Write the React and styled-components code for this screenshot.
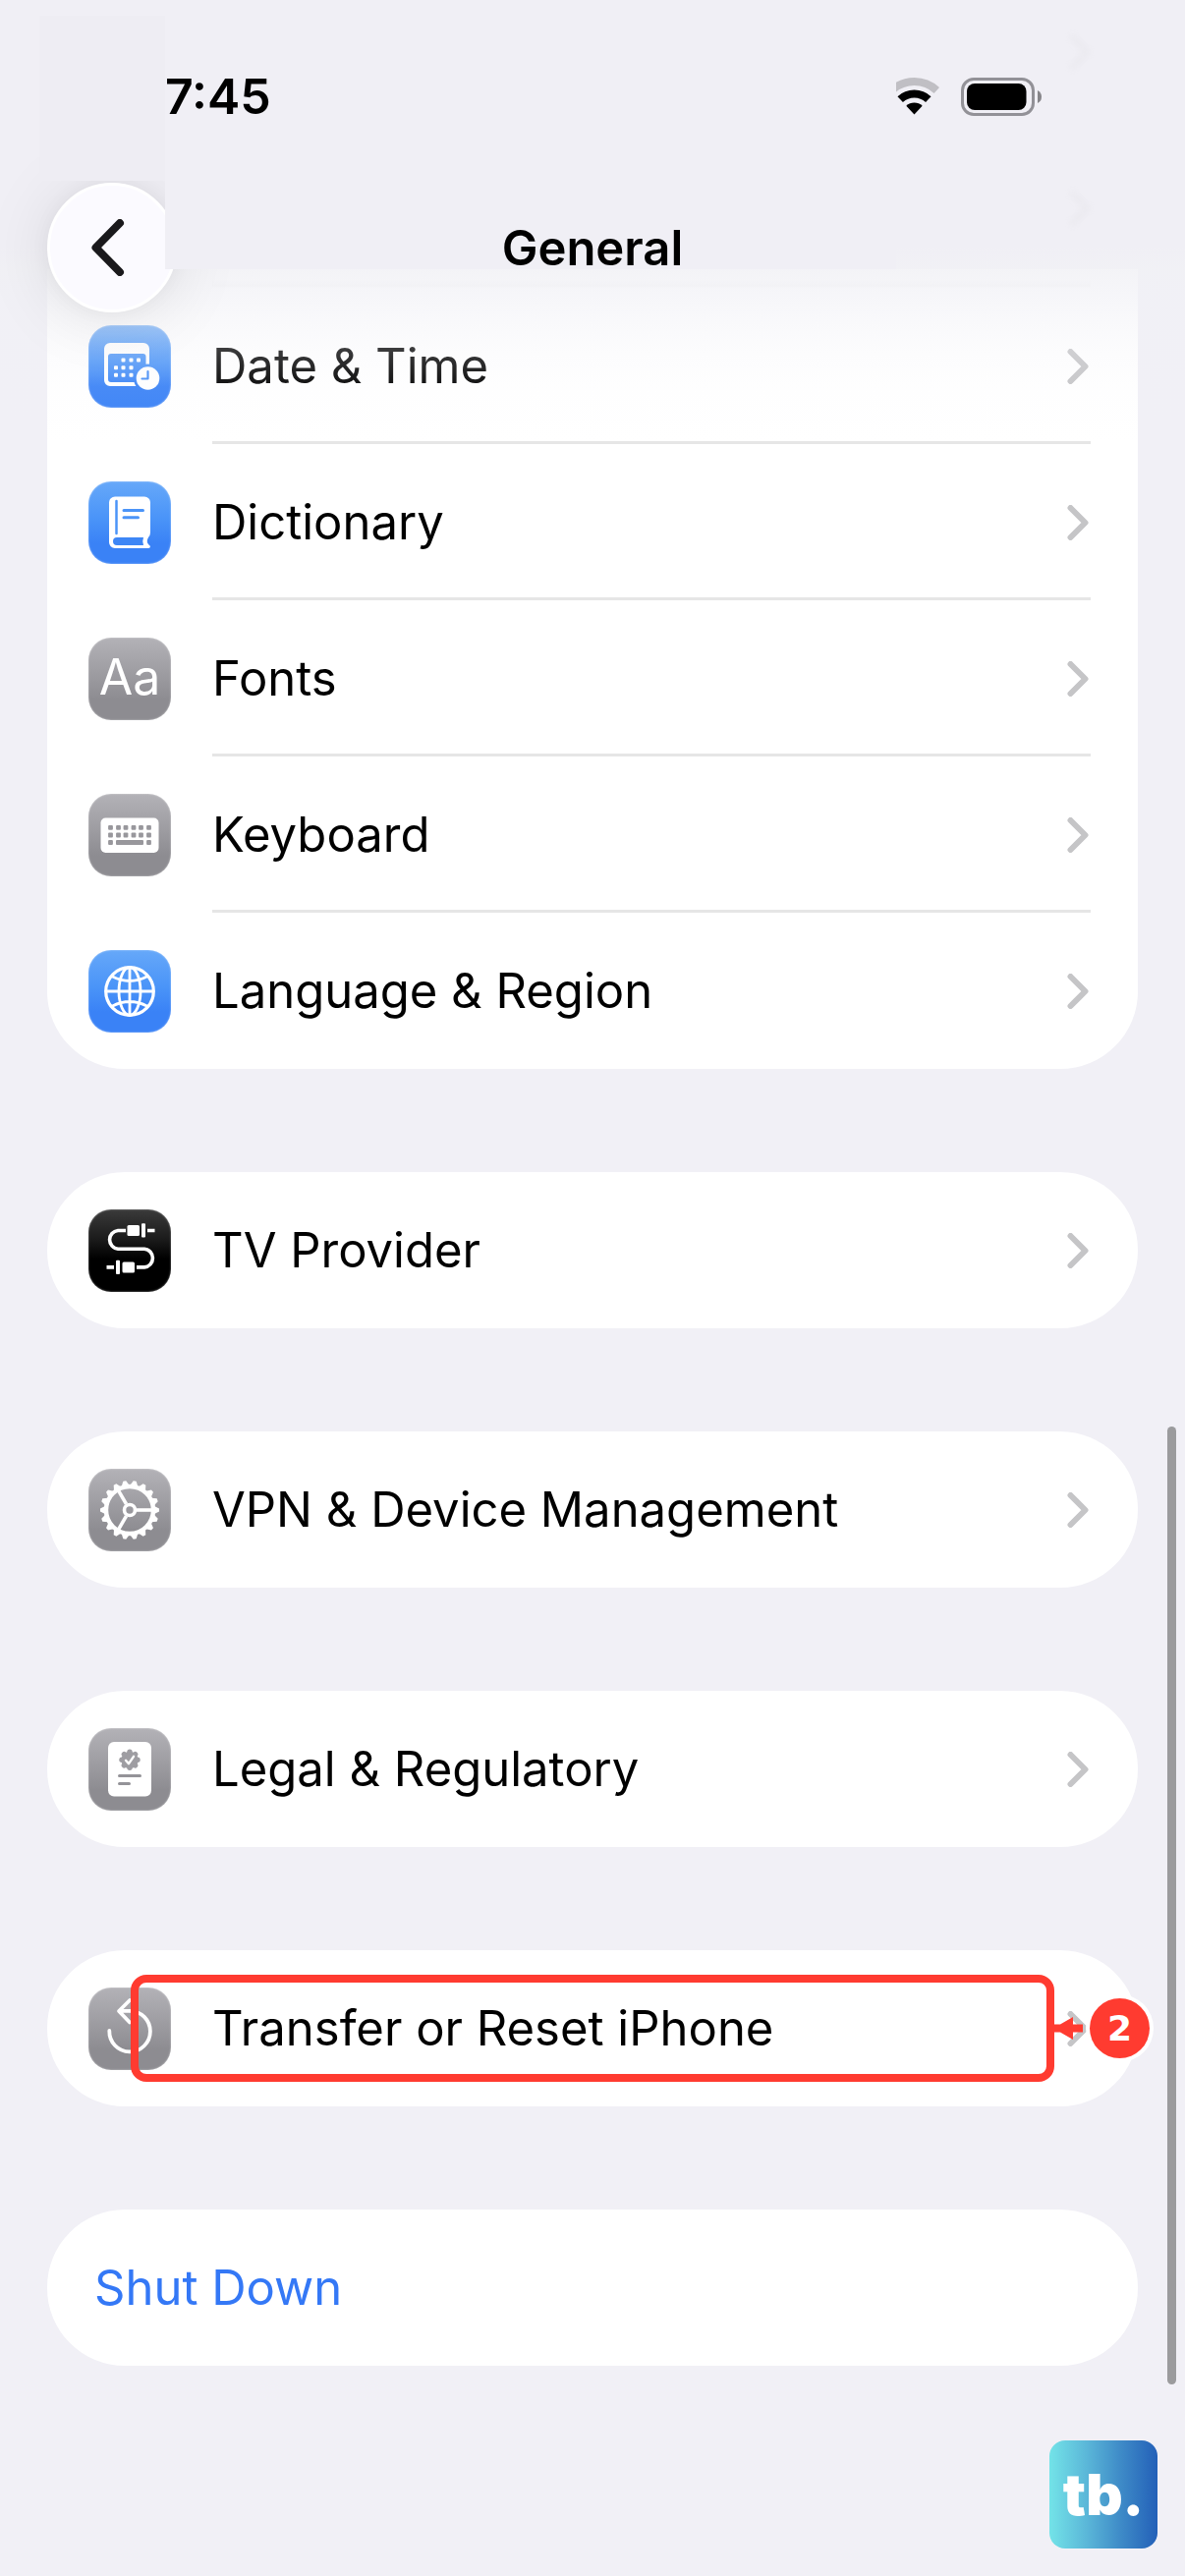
import React from 'react';
import styled, { createGlobalStyle, ThemeProvider } from 'styled-components';

const theme = {
  color: {
    page: '#f1f0f6',
    bar: '#f0eff5',
    card: '#ffffff',
    text: '#000000',
    link: '#3478f6',
    divider: '#e6e6e6',
    chevron: '#c5c5c7',
    scroll: '#9b9b9d',
    mark: '#ff3b30',
  },
  tile: {
    blue: 'linear-gradient(#66a8f9, #4a94f8 45%, #3a82f6 75%)',
    grey: 'linear-gradient(#b3b2b7, #9a999e 50%, #8d8c91 75%)',
    black: 'linear-gradient(#3a3a3a, #1c1c1c 35%, #000000 60%)',
  },
};

const GlobalStyle = createGlobalStyle`
  body {
    margin: 0;
    background: ${theme.color.page};
    font-family: Inter, "Liberation Sans", sans-serif;
  }
`;

const Screen = styled.div`
  position: relative;
  min-height: 100vh;
  box-sizing: border-box;
  background: ${(props) => props.theme.color.page};
  color: ${(props) => props.theme.color.text};
`;

const Header = styled.header`
  position: sticky;
  top: 0;
  z-index: 2;
`;

const Wash = styled.div`
  position: absolute;
  top: 0;
  left: 0;
  right: 0;
  height: 450px;
  pointer-events: none;
  background: linear-gradient(
    rgba(240, 239, 245, 1) 250px,
    rgba(241, 241, 245, 0.84) 274px,
    rgba(241, 241, 246, 0.65) 300px,
    rgba(241, 241, 246, 0.4) 331px,
    rgba(241, 241, 246, 0.24) 356px,
    rgba(241, 241, 246, 0.08) 392px,
    rgba(241, 241, 246, 0) 450px
  );

  svg {
    position: absolute;
    right: 96px;
    opacity: 0.12;
    filter: blur(3px);
  }

  svg:first-child {
    top: 35px;
  }

  svg:last-child {
    top: 194px;
  }
`;

const Cover = styled.div`
  position: absolute;
  z-index: 1;
  top: 0;
  left: 168px;
  right: 294px;
  height: 274px;
  background: ${(props) => props.theme.color.bar};

  &:before {
    content: "";
    position: absolute;
    top: 16px;
    right: 100%;
    width: 128px;
    height: 168px;
    background: #eeedf3;
  }
`;

const StatusBar = styled.div`
  position: relative;
  z-index: 2;
  display: flex;
  align-items: center;
  justify-content: space-between;
  height: 186px;
  padding: 10px 146px 0 168px;
  box-sizing: border-box;
`;

const Clock = styled.time`
  font-size: 50px;
  font-weight: 600;
`;

const StatusIcons = styled.div`
  display: flex;
  align-items: center;
  gap: 22px;
`;

const NavBar = styled.nav`
  display: grid;
  grid-template-columns: 132px 1fr 132px;
  align-items: center;
  padding: 0 48px;
`;

const BackButton = styled.button`
  position: relative;
  z-index: 1;
  display: flex;
  align-items: center;
  justify-content: center;
  width: 132px;
  height: 132px;
  padding: 0 8px 0 0;
  border: 3px solid #ffffff;
  border-radius: 50%;
  background: #fbfaff;
  color: #1a191c;
  box-shadow: 0 4px 70px rgba(0, 0, 0, 0.1), 0 0 20px rgba(0, 0, 0, 0.04);
`;

const Title = styled.h1`
  position: relative;
  z-index: 2;
  margin: 0;
  text-align: center;
  font-size: 49px;
  font-weight: 600;
`;

const Groups = styled.main`
  display: flex;
  flex-direction: column;
  gap: 105px;
  margin-top: -44px;
  padding: 0 48px 214px;
`;

const Card = styled.ul`
  margin: 0;
  padding: 0;
  list-style: none;
  border-radius: ${(props) => (props.$cut ? '0 0 79px 79px' : '79px')};
  background: ${(props) => props.theme.color.card};
`;

const CutRow = styled.li`
  height: 19px;
  margin: 0 48px 0 168px;
  background: linear-gradient(rgba(0, 0, 0, 0) 10px, rgba(0, 0, 0, 0.04) 17px, rgba(0, 0, 0, 0));
`;

const Item = styled.li`
  position: relative;
`;

const Row = styled.button`
  display: flex;
  align-items: center;
  gap: 42px;
  width: 100%;
  height: 159px;
  padding: 0 48px 0 42px;
  border: 0;
  background: none;
  color: inherit;
  font: inherit;
  text-align: left;
`;

const ActionRow = styled(Row)`
  padding: 0 48px;
  color: ${(props) => props.theme.color.link};
  font-size: 49px;
`;

const Tile = styled.span`
  flex: none;
  width: 84px;
  height: 84px;
  border-radius: 23px;
  background: ${(props) => props.theme.tile[props.$tone]};
  box-shadow: inset 0 0 2px rgba(255, 255, 255, 0.6);

  svg {
    display: block;
  }
`;

const RowBody = styled.span`
  display: flex;
  flex: 1;
  align-items: center;
  justify-content: space-between;
  height: 100%;
  padding-right: 2px;
  font-size: 49px;
  box-shadow: ${(props) => (props.$divided ? `inset 0 -3px ${props.theme.color.divider}` : 'none')};
`;

const Highlight = styled.div`
  position: absolute;
  inset: 25px 85px;
  border: 8px solid ${(props) => props.theme.color.mark};
  border-radius: 16px;
  pointer-events: none;
`;

const Arrow = styled.svg`
  position: absolute;
  top: 67px;
  right: 56px;
`;

const Step = styled.span`
  position: absolute;
  top: 49px;
  right: -12px;
  display: flex;
  align-items: center;
  justify-content: center;
  width: 61px;
  height: 61px;
  border-radius: 50%;
  background: ${(props) => props.theme.color.mark};
  box-shadow: 0 0 0 4px #ffffff;
  color: #ffffff;
  font: bold 36px "DejaVu Sans", sans-serif;
`;

const ScrollThumb = styled.div`
  position: absolute;
  top: 1452px;
  right: 9px;
  width: 9px;
  height: 975px;
  border-radius: 5px;
  background: ${(props) => props.theme.color.scroll};
`;

const Watermark = styled.div`
  position: absolute;
  right: 28px;
  bottom: 28px;
  display: flex;
  align-items: center;
  justify-content: center;
  width: 110px;
  height: 110px;
  border-radius: 16px;
  background: linear-gradient(90deg, #73e3e8, #5ab6d8 35%, #3f8cc8 65%, #2360b8);
  color: #ffffff;
  font: 900 58px Inter, sans-serif;
`;

const Chevron = () => (
  <svg width="22" height="36" viewBox="0 0 22 36" fill="none" stroke={theme.color.chevron} strokeWidth="6" strokeLinecap="round" strokeLinejoin="round">
    <path d="M3.5 3L18.5 18L3.5 33" />
  </svg>
);

const Glyph = ({ children, ...rest }) => (
  <svg width="84" height="84" viewBox="0 0 84 84" fill="none" strokeLinecap="round" strokeLinejoin="round" {...rest}>
    {children}
  </svg>
);

const dots = [[35.5, 35.5], [43.5, 35.5], [51, 35.5], [28, 43.2], [35.5, 43.2], [43.5, 43.2], [28, 50.7], [35.5, 50.7], [43.5, 50.7]];

const DateIcon = () => (
  <Glyph>
    <mask id="clock-gap">
      <rect width="84" height="84" fill="#fff" />
      <circle cx="60.5" cy="54" r="14.5" fill="#000" />
    </mask>
    <g mask="url(#clock-gap)" fill="#fff">
      <path fillRule="evenodd" d="M22 18H56a6 6 0 0 1 6 6V62H22a6 6 0 0 1-6-6V24a6 6 0 0 1 6-6ZM23 29a3 3 0 0 0-3 3V55a3 3 0 0 0 3 3H58.5V32a3 3 0 0 0-3-3Z" />
      {dots.map(([x, y]) => (
        <rect key={`${x}-${y}`} x={x - 2} y={y - 2} width="4" height="4" rx="1" />
      ))}
    </g>
    <circle cx="60.5" cy="54" r="11.8" fill="#fff" />
    <path d="M60.5 47V54.5H54.5" stroke="#458df6" strokeWidth="2.2" />
  </Glyph>
);

const DictionaryIcon = () => (
  <Glyph>
    <path fill="#fff" d="M27 15.5H57a6 6 0 0 1 6 6V52q0 3-2 5q-2.5 4 0 7l2 2q0 2-2 2H27a6 6 0 0 1-6-6V21.5a6 6 0 0 1 6-6Z" />
    <path fill="#3d86f6" d="M29 57H56q-1.5 4 0 8H29a4 4 0 0 1 0-8Z" />
    <path stroke="#4b94f8" strokeWidth="2.5" d="M28.5 20V53" />
    <path stroke="#4b94f8" strokeWidth="3" d="M36 29.5H55.5M36 36.7H50.5" />
  </Glyph>
);

const FontsIcon = () => (
  <Glyph>
    <text x="42" y="58" fill="#fff" textAnchor="middle" fontFamily="Inter, sans-serif" fontSize="50">Aa</text>
  </Glyph>
);

const keyColumns = [22.5, 30.5, 38, 46, 53.5, 61.5];

const KeyboardIcon = () => (
  <Glyph>
    <rect x="12.5" y="24.5" width="59" height="35.5" rx="5" fill="#fff" />
    <g fill="#98979c">
      {keyColumns.map((x) => (
        <React.Fragment key={x}>
          <rect x={x - 2.4} y="32" width="4.8" height="4.8" rx="1" />
          <rect x={x - 2.4} y="39.6" width="4.8" height="4.8" rx="1" />
        </React.Fragment>
      ))}
      <rect x="20.1" y="47.1" width="4.8" height="4.8" rx="1" />
      <rect x="28" y="47.1" width="28" height="4.8" rx="1" />
      <rect x="59.1" y="47.1" width="4.8" height="4.8" rx="1" />
    </g>
  </Glyph>
);

const GlobeIcon = () => (
  <Glyph stroke="#fff" strokeWidth="2.8">
    <circle cx="42" cy="42" r="24.3" strokeWidth="3.2" />
    <ellipse cx="42" cy="42" rx="11" ry="24.3" />
    <path d="M42 18V66M18 42H66M24.5 27Q42 36 59.5 27M24.5 57Q42 48 59.5 57" />
  </Glyph>
);

const CableIcon = () => (
  <Glyph stroke="#fff" strokeWidth="3.6" strokeLinecap="butt">
    <path d="M38 21.5H30a9.4 9.4 0 0 0 0 18.7H57a9.4 9.4 0 0 1 0 18.7H49M60 21.5H67.5M18.5 58.9H26" />
    <g fill="#fff" stroke="none">
      <rect x="39.5" y="16" width="12.5" height="11" rx="1.5" />
      <rect x="54" y="14.3" width="4" height="14.3" rx="1" />
      <rect x="34.5" y="53.4" width="12.5" height="11" rx="1.5" />
      <rect x="28" y="51.7" width="4" height="14.3" rx="1" />
    </g>
  </Glyph>
);

const GearIcon = () => (
  <Glyph stroke="#fff" strokeWidth="3.6" strokeLinecap="butt">
    <circle cx="42" cy="42" r="24" strokeWidth="4.4" />
    <circle cx="42" cy="42" r="5.5" />
    {Array.from({ length: 18 }, (_, i) => (
      <path key={i} d="M67 38L72 40.5V43.5L67 46Z" fill="#fff" stroke="none" transform={`rotate(${i * 20} 42 42)`} />
    ))}
    {[0, 120, 240].map((angle) => (
      <path key={angle} d="M49 42H65" transform={`rotate(${angle} 42 42)`} />
    ))}
  </Glyph>
);

const LegalIcon = () => (
  <Glyph>
    <rect x="20" y="14" width="44" height="55.5" rx="6" fill="#fff" />
    <g fill="#9e9da2">
      <circle cx="42" cy="32.3" r="8.6" />
      {Array.from({ length: 8 }, (_, i) => (
        <circle key={i} cx="42" cy="24.3" r="2.7" transform={`rotate(${i * 45} 42 32.3)`} />
      ))}
    </g>
    <path d="M38 32.8L41 36.2L46 28.8" stroke="#fff" strokeWidth="2.4" />
    <path d="M31.5 48.5H52.5M31.5 56.5H41.5" stroke="#949398" strokeWidth="3" />
  </Glyph>
);

const ResetIcon = () => (
  <Glyph stroke="#fff" strokeWidth="3.8">
    <path d="M21.3 44A20.8 20.8 0 1 0 42 23.8H32M42 13L31 24L42 35.5" />
  </Glyph>
);

const WifiIcon = () => (
  <svg width="44" height="38" viewBox="0 0 44 38" fill="none" strokeWidth="8">
    <path stroke="#c0bfc4" d="M-4.3 13A33.5 33.5 0 0 1 41.3 13" />
    <path stroke="#000" d="M4.2 22.1A21 21 0 0 1 32.8 22.1" />
    <path fill="#000" d="M18.5 37.5L10.3 28.7A12 12 0 0 1 26.7 28.7Z" />
  </svg>
);

const BatteryIcon = () => (
  <svg width="82" height="39" viewBox="0 0 82 39">
    <rect x="1.5" y="1.5" width="72" height="36" rx="11.5" fill="none" stroke="#929197" strokeWidth="3" />
    <rect x="6" y="6" width="60.5" height="27" rx="8" />
    <path fill="#868589" d="M78 13Q82 15 82 19.5T78 26Z" />
  </svg>
);

const groups = [
  [
    { label: 'Date & Time', tone: 'blue', icon: DateIcon },
    { label: 'Dictionary', tone: 'blue', icon: DictionaryIcon },
    { label: 'Fonts', tone: 'grey', icon: FontsIcon },
    { label: 'Keyboard', tone: 'grey', icon: KeyboardIcon },
    { label: 'Language & Region', tone: 'blue', icon: GlobeIcon },
  ],
  [{ label: 'TV Provider', tone: 'black', icon: CableIcon }],
  [{ label: 'VPN & Device Management', tone: 'grey', icon: GearIcon }],
  [{ label: 'Legal & Regulatory', tone: 'grey', icon: LegalIcon }],
  [{ label: 'Transfer or Reset iPhone', tone: 'grey', icon: ResetIcon, step: 2 }],
];

function SettingsItem({ item, divided }) {
  const Icon = item.icon;

  return (
    <Item>
      <Row type="button">
        <Tile $tone={item.tone}>
          <Icon />
        </Tile>
        <RowBody $divided={divided}>
          {item.label}
          <Chevron />
        </RowBody>
      </Row>
      {item.step && (
        <>
          <Highlight />
          <Arrow width="29" height="25" viewBox="0 0 29 25" fill={theme.color.mark}>
            <path d="M0 8.5H6L19 1V8.5H29V16.5H19V24L6 16.5H0Z" />
          </Arrow>
          <Step>{item.step}</Step>
        </>
      )}
    </Item>
  );
}

function App() {
  return (
    <ThemeProvider theme={theme}>
      <GlobalStyle />
      <Screen>
        <Header>
          <Wash>
            <Chevron />
            <Chevron />
          </Wash>
          <StatusBar>
            <Clock>7:45</Clock>
            <StatusIcons>
              <WifiIcon />
              <BatteryIcon />
            </StatusIcons>
          </StatusBar>
          <NavBar>
            <BackButton type="button" aria-label="Back">
              <svg width="34" height="58" viewBox="0 0 34 58" fill="none" stroke="currentColor" strokeWidth="8" strokeLinecap="round" strokeLinejoin="round">
                <path d="M29 4L4.5 29L29 54" />
              </svg>
            </BackButton>
            <Cover />
            <Title>General</Title>
          </NavBar>
        </Header>
        <Groups>
          {groups.map((items, index) => (
            <Card key={items[0].label} $cut={index === 0}>
              {index === 0 && <CutRow />}
              {items.map((item, i) => (
                <SettingsItem key={item.label} item={item} divided={i < items.length - 1} />
              ))}
            </Card>
          ))}
          <Card>
            <Item>
              <ActionRow type="button">Shut Down</ActionRow>
            </Item>
          </Card>
        </Groups>
        <ScrollThumb />
        <Watermark>tb.</Watermark>
      </Screen>
    </ThemeProvider>
  );
}

export default App;
